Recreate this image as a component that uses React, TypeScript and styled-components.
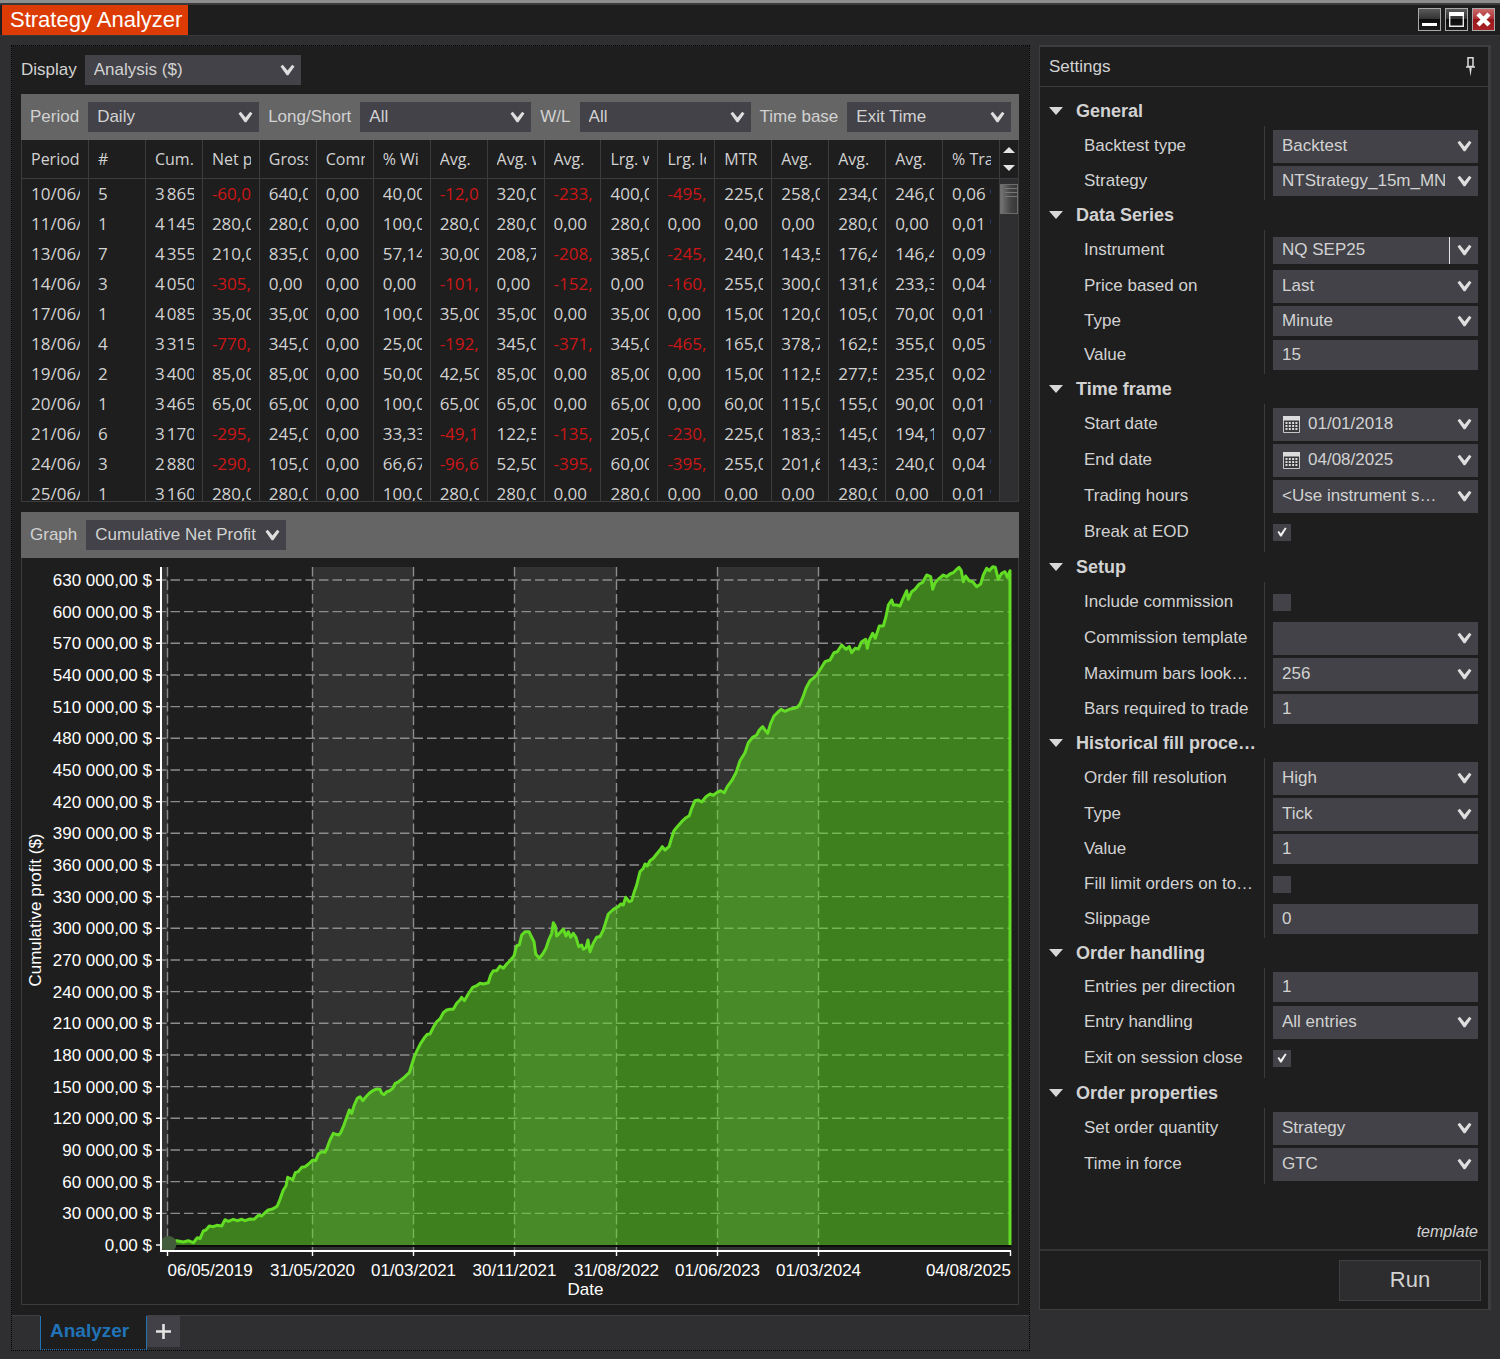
import React from "react";
import styled, { createGlobalStyle, css } from "styled-components";

const c = {
  dark: "#1e1e1e",
  frame: "#2f2f31",
  field: "#424248",
  bar: "#656565",
  line: "#3c3c3d",
  text: "#d2d2d2",
  red: "#cc1616",
  blue: "#2173b8",
};

const GlobalStyle = createGlobalStyle`
  * { box-sizing: border-box; }
  body {
    margin: 0;
    background: ${c.frame};
    color: ${c.text};
    font: 17px/20px "Liberation Sans", Arial, sans-serif;
  }
  button, input, select { font: inherit; color: inherit; border: 0; border-radius: 0; margin: 0; outline: 0; }
  button { padding: 0; background: none; cursor: pointer; }
`;

/* ---------- window frame ---------- */

const Window = styled.div`
  display: flex;
  flex-direction: column;
  min-height: 100vh;
`;

const TitleBar = styled.header`
  display: flex;
  align-items: center;
  justify-content: space-between;
  height: 36px;
  padding: 0 5px 0 2px;
  background: ${c.dark};
  border-top: 3px solid #8d8f8e;
  border-bottom: 1px solid #38383a;
  box-shadow: inset 0 2px 0 #3a3a3c;
`;

const Title = styled.h1`
  align-self: flex-end;
  margin: 0;
  padding: 0 6px 0 8px;
  background: #dc3c04;
  color: #fff;
  font-size: 22px;
  line-height: 30px;
  font-weight: 400;
`;

const WindowButtons = styled.div`
  display: flex;
  gap: 4px;
`;

const WindowButton = styled.button<{ $close?: boolean }>`
  display: grid;
  place-items: center;
  width: 23px;
  height: 23px;
  border: 1px solid #a9a9a9;
  background: ${(p) =>
    p.$close
      ? "linear-gradient(#c9686b 0%, #ad2c30 50%, #98161a 50%, #a82226 100%)"
      : "linear-gradient(#5a5a5a 0%, #303030 50%, #0c0c0c 50%, #1c1c1c 100%)"};
`;

const Workspace = styled.main`
  display: flex;
  align-items: flex-start;
  gap: 9px;
  flex: 1;
  padding: 9px 9px 8px 11px;
`;

/* ---------- shared controls ---------- */

const FieldBox = styled.div<{ $height?: number; $width?: number }>`
  display: grid;
  grid-template-columns: minmax(0, 1fr);
  align-items: center;
  height: ${(p) => p.$height ?? 30}px;
  background: ${c.field};
  ${(p) => (p.$width ? css`width: ${p.$width}px;` : css`flex: 1;`)}
  > * { grid-area: 1 / 1; }
`;

const Picker = styled.select<{ $snug?: boolean }>`
  appearance: none;
  width: 100%;
  height: 100%;
  padding: 0 ${(p) => (p.$snug ? 22 : 33)}px 0 9px;
  background: transparent;
  option { background: ${c.field}; }
`;

const TextBox = styled.input<{ $icon?: boolean }>`
  width: 100%;
  height: 100%;
  padding: 0 33px 0 ${(p) => (p.$icon ? 35 : 9)}px;
  background: transparent;
`;

const ChevronSvg = styled.svg`
  justify-self: end;
  margin-right: 6px;
  pointer-events: none;
`;

const Chevron = () => (
  <ChevronSvg width="15" height="12" viewBox="0 0 15 12" aria-hidden="true">
    <path d="M0.5 2.4L2.8 0.8L7.5 6.4L12.2 0.8L14.5 2.4L8.3 11.2H6.7Z" fill="#dedede" />
  </ChevronSvg>
);

type DropProps = { id: string; value: string; height?: number; width?: number; snug?: boolean };

const Dropdown = ({ id, value, height, width, snug }: DropProps) => (
  <FieldBox $height={height} $width={width}>
    <Picker id={id} $snug={snug} defaultValue={value}>
      <option value={value}>{value}</option>
    </Picker>
    <Chevron />
  </FieldBox>
);

/* ---------- analyzer pane ---------- */

const Analyzer = styled.section`
  flex: 1;
  min-width: 0;
  background: ${c.dark};
  background-clip: padding-box;
  border: 1px dotted #000;
`;

const AnalyzerBody = styled.div`
  display: flex;
  flex-direction: column;
  padding: 9px 10px 11px 9px;
`;

const DisplayRow = styled.div`
  display: flex;
  align-items: center;
  gap: 8px;
  margin-bottom: 9px;
`;

const Toolbar = styled.div`
  display: flex;
  align-items: center;
  gap: 9px;
  padding: 8px 8px 8px 9px;
  background: ${c.bar};
`;

const Grid = styled.div`
  display: flex;
  height: 362px;
  margin-bottom: 10px;
  border: 1px solid ${c.line};
  border-top: 0;
  overflow: hidden;
`;

const Table = styled.table`
  flex: 1;
  width: 0;
  min-width: 0;
  align-self: flex-start;
  table-layout: fixed;
  border-collapse: separate;
  border-spacing: 0;
  font-family: "Segoe UI", "Open Sans", "Noto Sans", sans-serif;
  th, td {
    height: 30px;
    padding: 0 8px 0 9px;
    border-right: 1px solid ${c.line};
    font-weight: 400;
    text-align: left;
  }
  th { height: 39px; border-bottom: 1px solid ${c.line}; font-size: 16px; }
  th:first-child { width: 67px; }
`;

const Clip = styled.div<{ $negative?: boolean }>`
  overflow: hidden;
  white-space: nowrap;
  line-height: 24px;
  color: ${(p) => (p.$negative ? c.red : "inherit")};
`;

const Rail = styled.div`
  display: flex;
  flex-direction: column;
  width: 18px;
  background: ${c.frame};
`;

const RailArrows = styled.div`
  display: flex;
  flex-direction: column;
  align-items: center;
  justify-content: center;
  gap: 12px;
  height: 39px;
  background: ${c.dark};
  border-bottom: 1px solid ${c.line};
  button { display: block; height: 6px; }
  svg { display: block; }
`;

const Thumb = styled.div`
  height: 30px;
  margin-top: 5px;
  padding: 5px 3px;
  border: 1px solid #6c6c6c;
  background:
    repeating-linear-gradient(#777 0 1px, transparent 1px 4px) 4px 3px / 12px 9px no-repeat,
    linear-gradient(90deg, #757575, #444 60%, #383838);
`;

const GridRow = styled.tr`
  font-size: 17px;
`;

const heads = ["Period", "#", "Cum.", "Net p", "Gross", "Comm", "% Wi", "Avg.", "Avg. w", "Avg.", "Lrg. w", "Lrg. lo", "MTR", "Avg.", "Avg.", "Avg.", "% Tra"];

const rows = [
  "10/06/|5|3\u202f865|-60,0|640,0|0,00|40,00|-12,0|320,0|-233,|400,0|-495,|225,0|258,0|234,0|246,0|0,06 %",
  "11/06/|1|4\u202f145|280,0|280,0|0,00|100,0|280,0|280,0|0,00|280,0|0,00|0,00|0,00|280,0|0,00|0,01 %",
  "13/06/|7|4\u202f355|210,0|835,0|0,00|57,14|30,00|208,7|-208,|385,0|-245,|240,0|143,5|176,4|146,4|0,09 %",
  "14/06/|3|4\u202f050|-305,|0,00|0,00|0,00|-101,|0,00|-152,|0,00|-160,|255,0|300,0|131,6|233,3|0,04 %",
  "17/06/|1|4\u202f085|35,00|35,00|0,00|100,0|35,00|35,00|0,00|35,00|0,00|15,00|120,0|105,0|70,00|0,01 %",
  "18/06/|4|3\u202f315|-770,|345,0|0,00|25,00|-192,|345,0|-371,|345,0|-465,|165,0|378,7|162,5|355,0|0,05 %",
  "19/06/|2|3\u202f400|85,00|85,00|0,00|50,00|42,50|85,00|0,00|85,00|0,00|15,00|112,5|277,5|235,0|0,02 %",
  "20/06/|1|3\u202f465|65,00|65,00|0,00|100,0|65,00|65,00|0,00|65,00|0,00|60,00|115,0|155,0|90,00|0,01 %",
  "21/06/|6|3\u202f170|-295,|245,0|0,00|33,33|-49,1|122,5|-135,|205,0|-230,|225,0|183,3|145,0|194,1|0,07 %",
  "24/06/|3|2\u202f880|-290,|105,0|0,00|66,67|-96,6|52,50|-395,|60,00|-395,|255,0|201,6|143,3|240,0|0,04 %",
  "25/06/|1|3\u202f160|280,0|280,0|0,00|100,0|280,0|280,0|0,00|280,0|0,00|0,00|0,00|280,0|0,00|0,01 %",
].map((r) => r.split("|"));

const Results = () => (
  <Grid>
    <Table>
      <thead>
        <tr>
          {heads.map((h, i) => (
            <th key={i} scope="col"><Clip>{h}</Clip></th>
          ))}
        </tr>
      </thead>
      <tbody>
        {rows.map((r) => (
          <GridRow key={r[0]}>
            {r.map((v, i) => (
              <td key={i}><Clip $negative={v.startsWith("-")}>{v}</Clip></td>
            ))}
          </GridRow>
        ))}
      </tbody>
    </Table>
    <Rail>
      <RailArrows>
        <button type="button" aria-label="Scroll up">
          <svg width="12" height="6" viewBox="0 0 12 6"><path d="M6 0L12 6H0Z" fill="#e4e4e4" /></svg>
        </button>
        <button type="button" aria-label="Scroll down">
          <svg width="12" height="6" viewBox="0 0 12 6"><path d="M0 0H12L6 6Z" fill="#e4e4e4" /></svg>
        </button>
      </RailArrows>
      <Thumb />
    </Rail>
  </Grid>
);

/* ---------- chart ---------- */

const ChartBox = styled.div`
  border: 1px solid ${c.line};
  border-top: 0;
`;

const ChartSvg = styled.svg`
  display: block;
  width: 100%;
  height: auto;
  text { fill: #fff; font: 17px "Liberation Sans", Arial, sans-serif; }
`;

// Equity curve samples, three units per chart pixel; each half has its own origin.
const firstHalf = "55,1185 80,1172 100,1176 115,1172 130,1178 142,1163 150,1166 160,1143 168,1140 178,1128 190,1130 200,1126 215,1128 225,1109 235,1114 250,1108 262,1112 275,1108 285,1112 300,1107 312,1108 325,1096 335,1098 345,1088 355,1080 365,1078 375,1073 382,1068 390,1048 400,1020 408,1008 413,982 420,985 428,990 436,968 445,965 455,952 465,950 475,943 488,930 497,932 505,912 515,905 525,907 532,892 540,870 550,850 558,853 566,855 572,848 580,830 588,808 598,780 605,790 613,765 622,745 630,740 638,752 648,740 658,730 668,722 680,717 690,718 695,730 702,734 710,725 718,723 728,715 736,700 745,696 755,688 765,680 778,668 785,645 793,620 802,600 812,580 822,565 832,553 840,552 850,532 860,515 870,507 880,488 890,480 900,478 910,478 920,460 930,450 935,442 943,452 955,432 968,412 980,407 990,400 1000,402 1015,398 1022,375 1030,362 1040,362 1050,348 1060,355 1070,342 1080,332 1092,318 1100,287 1108,285 1115,255 1125,245 1137,245 1145,262 1152,275 1157,312 1168,325 1178,312 1188,295 1197,268 1205,250 1210,218 1216,228 1220,258 1230,248 1240,237 1248,258 1255,245 1262,262 1270,250 1278,262 1286,290 1295,285 1300,298 1308,293 1314,270 1320,305 1330,280 1340,262 1348,260";
const secondHalf = "0,1160 10,1140 25,1092 38,1080 45,1075 55,1070 62,1062 70,1065 77,1042 88,1055 95,1052 103,1025 110,1005 120,965 130,955 135,942 142,948 150,932 160,925 170,912 180,900 187,890 195,900 207,890 213,870 222,842 232,830 245,815 258,803 268,797 275,775 285,752 295,750 305,756 318,740 330,732 340,736 350,728 362,722 373,728 382,710 395,692 408,668 420,632 435,608 445,578 458,562 470,555 478,540 488,530 495,540 503,550 512,520 522,498 532,488 543,478 555,484 568,478 582,475 592,472 600,462 610,438 618,415 630,392 640,385 650,375 663,355 675,335 690,330 702,308 712,305 725,285 738,298 748,290 755,308 765,295 775,297 785,275 797,268 802,295 808,270 818,250 826,265 838,228 850,228 858,200 865,165 875,150 880,165 890,165 900,168 908,148 920,122 925,148 935,125 945,118 958,102 968,97 980,75 992,80 998,118 1005,98 1018,85 1030,75 1040,80 1050,72 1060,68 1070,58 1077,52 1084,62 1090,95 1097,78 1107,92 1118,95 1130,110 1142,102 1150,75 1160,55 1168,62 1178,50 1186,52 1195,88 1205,70 1215,65 1222,82 1230,62";

const toChart = (samples: string, ox: number, oy: number) =>
  samples.split(" ").map((s) => {
    const [x, y] = s.split(",").map(Number);
    return `${(ox + x / 3).toFixed(1)},${(oy + y / 3).toFixed(1)}`;
  });

const curve = [...toChart(firstHalf, 150, 850), ...toChart(secondHalf, 600, 550)].join(" ");

const yTicks = Array.from({ length: 22 }, (_, i) => ({
  label: i === 0 ? "0,00 $" : `${i * 30}\u00a0000,00 $`,
  y: 1245 - i * 31.67,
}));

const xTicks = [
  { x: 167.5, label: "06/05/2019" },
  { x: 312.5, label: "31/05/2020" },
  { x: 413.5, label: "01/03/2021" },
  { x: 514.5, label: "30/11/2021" },
  { x: 616.5, label: "31/08/2022" },
  { x: 717.5, label: "01/06/2023" },
  { x: 818.5, label: "01/03/2024" },
];

const bands = [[161, 7], [312.5, 101], [514.5, 102], [717.5, 101]];

const Chart = () => (
  <ChartSvg viewBox="22 558 996 746" role="img" aria-label="Cumulative profit by date">
    {bands.map(([x, w]) => (
      <rect key={x} x={x} y="567" width={w} height="684" fill="#323232" />
    ))}
    <g stroke="#8c8c8c" strokeWidth="1.4" strokeDasharray="9.5 4">
      {yTicks.slice(1).map((t) => (
        <line key={t.y} x1="157" x2="1010" y1={t.y} y2={t.y} />
      ))}
      {xTicks.map((t) => (
        <line key={t.x} x1={t.x} x2={t.x} y1="567" y2="1251" />
      ))}
    </g>
    <line x1="168" x2="1011" y1="1246" y2="1246" stroke="#0c0c0c" strokeWidth="2" />
    <polygon points={`168,1245 ${curve} 1010,1245`} fill="rgb(96,226,30)" fillOpacity="0.5" />
    <polyline points={`${curve} 1010,1245`} fill="none" stroke="#62dc24" strokeWidth="3" strokeLinejoin="round" />
    <circle cx="168.5" cy="1244" r="8" fill="#435c3b" />
    <g stroke="#fff" strokeWidth="1.4">
      {yTicks.map((t) => (
        <line key={t.y} x1="156" x2="161" y1={t.y} y2={t.y} />
      ))}
      {xTicks.map((t) => (
        <line key={t.x} x1={t.x} x2={t.x} y1="1251" y2="1256" />
      ))}
      <line x1="1010.5" x2="1010.5" y1="1251" y2="1256" />
    </g>
    <path d="M161 567V1252M160 1251H1011" stroke="#fff" strokeWidth="2" fill="none" />
    {yTicks.map((t) => (
      <text key={t.y} x="152" y={t.y + 6} textAnchor="end">{t.label}</text>
    ))}
    {xTicks.map((t, i) => (
      <text key={t.x} x={t.x} y="1276" textAnchor={i === 0 ? "start" : "middle"}>{t.label}</text>
    ))}
    <text x="1011" y="1276" textAnchor="end">04/08/2025</text>
    <text x="585.5" y="1295" textAnchor="middle">Date</text>
    <text transform="translate(41 910) rotate(-90)" textAnchor="middle">Cumulative profit ($)</text>
  </ChartSvg>
);

/* ---------- tab strip ---------- */

const TabStrip = styled.nav`
  display: flex;
  height: 34px;
  padding-left: 28px;
  background: ${c.frame};
  box-shadow: 0 -1px 0 #3f3f41;
`;

const Tab = styled.button`
  padding: 0 17px 4px 9px;
  background: ${c.dark};
  border: 1px solid ${c.blue};
  border-top: 0;
  border-bottom-style: dotted;
  box-shadow: 0 -1px 0 ${c.dark};
  color: ${c.blue};
  font-size: 19px;
  font-weight: 700;
`;

const AddTab = styled.button`
  display: grid;
  place-items: center;
  width: 33px;
  height: 31px;
  background: #414147;
`;

/* ---------- settings ---------- */

const Panel = styled.aside`
  flex: 0 0 452px;
  background: ${c.dark};
  border: 1px solid #3d3d3f;
  border-top-width: 2px;
  border-right-width: 3px;
`;

const PanelHead = styled.div`
  display: flex;
  align-items: center;
  justify-content: space-between;
  height: 40px;
  padding: 0 13px 0 9px;
  border-bottom: 1px solid #3d3d3f;
  h2 { margin: 0; font-size: 17px; font-weight: 400; }
  svg { display: block; }
`;

const Groups = styled.div`
  padding-top: 9px;
`;

const GroupTitle = styled.h3`
  margin: 0;
  button {
    display: flex;
    align-items: center;
    gap: 13px;
    width: 100%;
    height: 30px;
    padding-left: 9px;
    font-size: 18px;
    font-weight: 700;
    white-space: nowrap;
  }
`;

const GroupBody = styled.div`
  display: flex;
`;

const Labels = styled.div`
  display: flex;
  flex-direction: column;
  width: 225px;
  padding: 2px 0 2px 44px;
  border-right: 1px solid ${c.line};
  white-space: nowrap;
`;

const Controls = styled.div`
  display: flex;
  flex-direction: column;
  flex: 1;
  min-width: 0;
  padding: 2px 10px 2px 8px;
`;

type Kind = "tall" | "short" | "date" | "text" | "check" | "instrument";

const Line = styled.div<{ $kind: Kind }>`
  display: flex;
  align-items: center;
  height: ${(p) => (p.$kind === "short" || p.$kind === "text" ? 34 : 36)}px;
`;

const InstrumentDivider = styled.span`
  justify-self: end;
  width: 1px;
  height: 100%;
  margin-right: 28px;
  background: #e6e6e6;
`;

const CalendarSvg = styled.svg`
  margin-left: 10px;
  pointer-events: none;
`;

const CheckCell = styled.div`
  display: grid;
  place-items: center;
  width: 18px;
  height: 17px;
  > * { grid-area: 1 / 1; }
  svg { pointer-events: none; display: none; }
  input:checked + svg { display: block; }
`;

const Check = styled.input`
  appearance: none;
  width: 18px;
  height: 17px;
  background: ${c.field};
`;

const Calendar = () => (
  <CalendarSvg width="17" height="17" viewBox="0 0 17 17" aria-hidden="true">
    <path d="M0.5 0.5H16.5V16.5H0.5Z" fill="#3a3a3e" stroke="#c6c6c6" />
    <path d="M0 0H17V4.5H0Z" fill="#dcdcdc" />
    <path d="M2.5 7H14.5M2.5 10H14.5M2.5 13H14.5" stroke="#dadada" strokeWidth="2" strokeDasharray="2 1.3" />
  </CalendarSvg>
);

type Row = { label: string; kind: Kind; value?: string; on?: boolean };

const groups: { title: string; rows: Row[] }[] = [
  { title: "General", rows: [
    { label: "Backtest type", kind: "tall", value: "Backtest" },
    { label: "Strategy", kind: "short", value: "NTStrategy_15m_MN" },
  ] },
  { title: "Data Series", rows: [
    { label: "Instrument", kind: "instrument", value: "NQ SEP25" },
    { label: "Price based on", kind: "tall", value: "Last" },
    { label: "Type", kind: "short", value: "Minute" },
    { label: "Value", kind: "text", value: "15" },
  ] },
  { title: "Time frame", rows: [
    { label: "Start date", kind: "date", value: "01/01/2018" },
    { label: "End date", kind: "date", value: "04/08/2025" },
    { label: "Trading hours", kind: "tall", value: "<Use instrument s…" },
    { label: "Break at EOD", kind: "check", on: true },
  ] },
  { title: "Setup", rows: [
    { label: "Include commission", kind: "check" },
    { label: "Commission template", kind: "tall", value: "" },
    { label: "Maximum bars look…", kind: "tall", value: "256" },
    { label: "Bars required to trade", kind: "text", value: "1" },
  ] },
  { title: "Historical fill proce…", rows: [
    { label: "Order fill resolution", kind: "tall", value: "High" },
    { label: "Type", kind: "tall", value: "Tick" },
    { label: "Value", kind: "text", value: "1" },
    { label: "Fill limit orders on to…", kind: "check" },
    { label: "Slippage", kind: "text", value: "0" },
  ] },
  { title: "Order handling", rows: [
    { label: "Entries per direction", kind: "text", value: "1" },
    { label: "Entry handling", kind: "tall", value: "All entries" },
    { label: "Exit on session close", kind: "check", on: true },
  ] },
  { title: "Order properties", rows: [
    { label: "Set order quantity", kind: "tall", value: "Strategy" },
    { label: "Time in force", kind: "tall", value: "GTC" },
  ] },
];

const Control = ({ id, row }: { id: string; row: Row }) => {
  const value = row.value ?? "";
  switch (row.kind) {
    case "check":
      return (
        <CheckCell>
          <Check id={id} type="checkbox" defaultChecked={row.on} />
          <svg width="10" height="10" viewBox="0 0 10 10" aria-hidden="true">
            <path d="M0.5 5L2 4L3.8 6.4L8 0.5L9.6 1.2L4.6 9.6H3.2Z" fill="#f0f0f0" />
          </svg>
        </CheckCell>
      );
    case "text":
      return <FieldBox><TextBox id={id} defaultValue={value} /></FieldBox>;
    case "date":
      return (
        <FieldBox $height={33}>
          <TextBox id={id} $icon defaultValue={value} />
          <Calendar />
          <Chevron />
        </FieldBox>
      );
    case "instrument":
      return (
        <FieldBox $height={27}>
          <TextBox id={id} defaultValue={value} />
          <InstrumentDivider />
          <Chevron />
        </FieldBox>
      );
    default:
      return <Dropdown id={id} value={value} height={row.kind === "tall" ? 33 : 30} />;
  }
};

const TemplateRow = styled.div`
  display: flex;
  justify-content: flex-end;
  align-items: flex-end;
  height: 67px;
  padding: 0 10px 7px;
  border-bottom: 2px solid #343436;
  a { color: inherit; font-size: 16px; font-style: italic; text-decoration: none; }
`;

const PanelFoot = styled.div`
  display: flex;
  justify-content: flex-end;
  padding: 9px 7px 8px;
`;

const RunButton = styled.button`
  width: 142px;
  height: 41px;
  padding-bottom: 2px;
  background: #2d2d2f;
  border: 1px solid #3f3f41;
  font-size: 22px;
`;

const Settings = () => (
  <Panel>
    <PanelHead>
      <h2>Settings</h2>
      <button type="button" aria-label="Pin settings">
        <svg width="9" height="20" viewBox="0 0 9 20" fill="none" stroke="#dcdcdc">
          <path d="M2 0.8H7V9.5H2ZM0 10H9" strokeWidth="1.5" />
          <path d="M3.2 10.5H5.8L4.5 19.5Z" fill="#dcdcdc" stroke="none" />
        </svg>
      </button>
    </PanelHead>
    <Groups>
      {groups.map((g, gi) => (
        <section key={g.title}>
          <GroupTitle>
            <button type="button">
              <svg width="14" height="8" viewBox="0 0 14 8" aria-hidden="true">
                <path d="M0 0H14L7 8Z" fill="#d8d8d8" />
              </svg>
              {g.title}
            </button>
          </GroupTitle>
          <GroupBody>
            <Labels>
              {g.rows.map((r, ri) => (
                <Line key={ri} $kind={r.kind}>
                  <label htmlFor={`set-${gi}-${ri}`}>{r.label}</label>
                </Line>
              ))}
            </Labels>
            <Controls>
              {g.rows.map((r, ri) => (
                <Line key={ri} $kind={r.kind}>
                  <Control id={`set-${gi}-${ri}`} row={r} />
                </Line>
              ))}
            </Controls>
          </GroupBody>
        </section>
      ))}
    </Groups>
    <TemplateRow><a href="#template">template</a></TemplateRow>
    <PanelFoot><RunButton type="button">Run</RunButton></PanelFoot>
  </Panel>
);

export default function App() {
  return (
    <Window>
      <GlobalStyle />
      <TitleBar>
        <Title>Strategy Analyzer</Title>
        <WindowButtons>
          <WindowButton type="button" aria-label="Minimize">
            <svg width="15" height="15" viewBox="0 0 15 15"><path d="M0 11H15V14H0Z" fill="#fff" /></svg>
          </WindowButton>
          <WindowButton type="button" aria-label="Maximize">
            <svg width="15" height="15" viewBox="0 0 15 15">
              <path d="M0.7 1H14.3V14.3H0.7Z" fill="none" stroke="#e8e8e8" strokeWidth="1.4" />
              <path d="M0 0H15V4H0Z" fill="#fff" />
            </svg>
          </WindowButton>
          <WindowButton type="button" $close aria-label="Close">
            <svg width="15" height="15" viewBox="0 0 15 15"><path d="M2 2L13 13M13 2L2 13" stroke="#fff" strokeWidth="4.4" /></svg>
          </WindowButton>
        </WindowButtons>
      </TitleBar>
      <Workspace>
        <Analyzer>
          <AnalyzerBody>
            <DisplayRow>
              <label htmlFor="display">Display</label>
              <Dropdown id="display" value="Analysis ($)" width={216} />
            </DisplayRow>
            <Toolbar>
              <label htmlFor="period">Period</label>
              <Dropdown id="period" value="Daily" width={171} />
              <label htmlFor="side">Long/Short</label>
              <Dropdown id="side" value="All" width={171} />
              <label htmlFor="wl">W/L</label>
              <Dropdown id="wl" value="All" width={171} />
              <label htmlFor="base">Time base</label>
              <Dropdown id="base" value="Exit Time" />
            </Toolbar>
            <Results />
            <Toolbar>
              <label htmlFor="graph">Graph</label>
              <Dropdown id="graph" value="Cumulative Net Profit" width={200} snug />
            </Toolbar>
            <ChartBox><Chart /></ChartBox>
          </AnalyzerBody>
          <TabStrip>
            <Tab type="button">Analyzer</Tab>
            <AddTab type="button" aria-label="New tab">
              <svg width="15" height="15" viewBox="0 0 15 15"><path d="M7.5 0V15M0 7.5H15" stroke="#e4e4e4" strokeWidth="2.6" /></svg>
            </AddTab>
          </TabStrip>
        </Analyzer>
        <Settings />
      </Workspace>
    </Window>
  );
}
